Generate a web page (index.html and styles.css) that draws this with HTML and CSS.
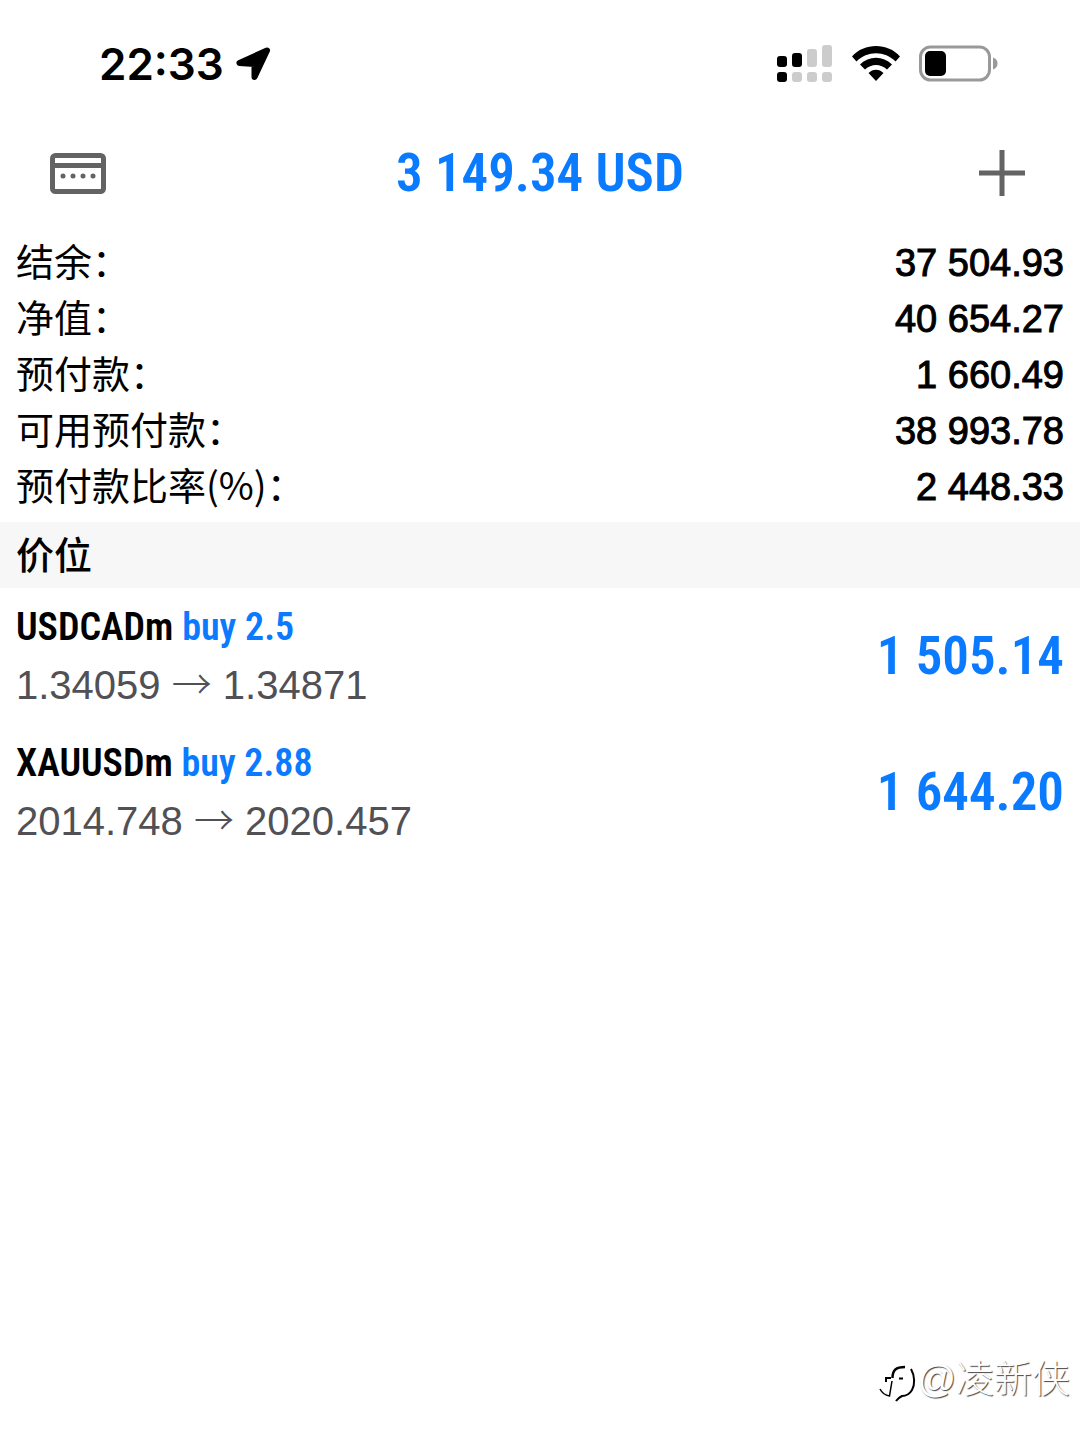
FILE: index.html
```
<!DOCTYPE html>
<html lang="zh-CN">
<head>
  <meta charset="UTF-8" />
  <meta name="viewport" content="width=device-width, initial-scale=1.0" />
  <title>交易</title>
  <link rel="stylesheet" href="styles.css">
</head>
<body>
  <div class="status-bar">
    <div class="status-left">
      <span class="time">22:33</span>
      <svg width="36" height="36" viewBox="0 0 36 36" aria-hidden="true">
        <path d="M32 4.500L4.500 17L19.500 18V31Z" stroke="#000" stroke-width="6" stroke-linejoin="round" />
      </svg>
    </div>
    <div class="status-right">
      <svg width="56" height="40" viewBox="0 0 56 40" aria-hidden="true">
        <rect x="0" y="12" width="10" height="11" rx="3" />
        <rect x="15" y="9" width="10" height="14" rx="3" />
        <g fill="#ccc">
          <rect x="30" y="5" width="10" height="18" rx="3" />
          <rect x="45" y="1" width="10" height="22" rx="3" />
          <rect x="15" y="28" width="10" height="10" rx="3" />
          <rect x="30" y="28" width="10" height="10" rx="3" />
          <rect x="45" y="28" width="10" height="10" rx="3" />
        </g>
        <rect x="0" y="28" width="10" height="10" rx="3" />
      </svg>
      <svg width="48" height="40" viewBox="0 0 48 40" aria-hidden="true">
        <path d="M0 12.500C12-1.500 36-1.500 48 12.500L43.500 17.500C33 6.500 15 6.500 4.500 17.500Z" />
        <path d="M8 20.500C17 11.500 31 11.500 40 20.500L35 25.500C28.500 19.500 19.500 19.500 13 25.500Z" />
        <path d="M16.500 29C20.500 24.500 27.500 24.500 31.500 29L24 37Z" />
      </svg>
      <svg width="80" height="40" viewBox="0 0 80 40" aria-hidden="true">
        <rect x="1.500" y="3" width="69" height="33" rx="10" fill="none" stroke="#999" stroke-width="3" />
        <rect x="6" y="7" width="21" height="25" rx="5" />
        <path d="M74 13.500C80 15 80 24 74 25.500Z" fill="#999" />
      </svg>
    </div>
  </div>

  <header class="nav">
    <button class="icon-btn" aria-label="账户">
      <svg width="56" height="42" viewBox="0 0 56 42">
        <rect x="2.500" y="3.500" width="51" height="36" rx="3" fill="none" stroke="#636363" stroke-width="5" />
        <path d="M2 13.500H54" stroke="#636363" stroke-width="5" />
        <g fill="#636363">
          <circle cx="13" cy="24" r="2.500" />
          <circle cx="23" cy="24" r="2.500" />
          <circle cx="33" cy="24" r="2.500" />
          <circle cx="43" cy="24" r="2.500" />
        </g>
      </svg>
    </button>
    <h1>3 149.34 USD</h1>
    <button class="icon-btn add-btn" aria-label="新订单">
      <svg width="56" height="46" viewBox="0 0 56 46">
        <path d="M28 0V46M5 23H51" stroke="#636363" stroke-width="5" />
      </svg>
    </button>
  </header>

  <dl class="summary">
    <div><dt>结余：</dt><dd>37 504.93</dd></div>
    <div><dt>净值：</dt><dd>40 654.27</dd></div>
    <div><dt>预付款：</dt><dd>1 660.49</dd></div>
    <div><dt>可用预付款：</dt><dd>38 993.78</dd></div>
    <div><dt>预付款比率(%)：</dt><dd>2 448.33</dd></div>
  </dl>

  <h2>价位</h2>
  <ul class="positions">
    <li>
      <div>
        <p class="order">USDCADm <span class="side">buy 2.5</span></p>
        <p class="price">1.34059 <span class="arrow">→</span> 1.34871</p>
      </div>
      <span class="profit">1 505.14</span>
    </li>
    <li>
      <div>
        <p class="order">XAUUSDm <span class="side">buy 2.88</span></p>
        <p class="price">2014.748 <span class="arrow">→</span> 2020.457</p>
      </div>
      <span class="profit">1 644.20</span>
    </li>
  </ul>

  <footer class="watermark">
    <svg width="40" height="56" viewBox="0 4 40 56" fill="none" stroke="#000" aria-hidden="true">
      <path d="M15.500 31C15.500 23 19 20 28 20" stroke-width="2.500" />
      <path d="M9 35V31H14M22 31.500H26" stroke-width="2" />
      <path d="M15 34L12.500 49Q6 48 3 42" stroke-width="1.500" />
      <path d="M34 22C38 29 38 38 35 43C32 48 28 49 25 49Q21 51 19 54" stroke-width="2" />
    </svg>
    <span>@凌新侠</span>
  </footer>
</body>
</html>
```
FILE: styles.css
```
* {
  box-sizing: border-box;
  margin: 0;
  padding: 0;
}
body {
  display: flex;
  flex-direction: column;
  min-height: 100vh;
  background-color: #fff;
  color: #000;
  font-family: "Liberation Sans", "Noto Sans CJK SC", sans-serif;
}
svg {
  display: block;
}
.status-bar {
  display: flex;
  justify-content: space-between;
  align-items: center;
  height: 128px;
  padding: 0 81px 0 99px;
}
.status-left {
  display: flex;
  align-items: center;
  gap: 11px;
}
.time {
  font-family: Inter, sans-serif;
  font-size: 44px;
  font-weight: 600;
}
.status-right {
  display: flex;
  align-items: center;
  gap: 19px;
}
.nav {
  display: grid;
  grid-template-columns: 1fr auto 1fr;
  align-items: center;
  height: 90px;
  padding: 0 50px;
}
.icon-btn {
  justify-self: start;
  border: none;
  background: none;
  cursor: pointer;
}
.add-btn {
  justify-self: end;
}
.nav h1,
.profit {
  color: #0a7aff;
  font-family: "Roboto Condensed", "Noto Sans CJK SC", sans-serif;
  font-size: 53px;
  font-weight: 600;
  line-height: 56px;
}
.summary {
  padding: 17px 16px 7px;
}
.summary div {
  display: flex;
  justify-content: space-between;
  height: 56px;
  font-size: 38px;
  line-height: 56px;
}
.summary dt {
  font-family: "Noto Sans CJK SC", sans-serif;
  line-height: 50px;
}
.summary dd {
  -webkit-text-stroke: 1px #000;
}
h2 {
  padding: 0 16px 4px;
  background-color: #f7f7f7;
  font-family: "Noto Sans CJK SC", sans-serif;
  font-size: 38px;
  font-weight: 500;
  line-height: 62px;
}
.positions {
  list-style: none;
}
.positions li {
  display: flex;
  justify-content: space-between;
  align-items: center;
  height: 136px;
  padding: 0 16px;
}
.order {
  font-family: "Roboto Condensed", "Noto Sans CJK SC", sans-serif;
  font-size: 38px;
  font-weight: 600;
  line-height: 58px;
}
.side {
  color: #0a7aff;
}
.price {
  color: #505055;
  font-size: 40px;
  line-height: 58px;
}
.arrow {
  font-family: "Noto Sans CJK SC", sans-serif;
  font-weight: 300;
  line-height: 1;
}
.watermark {
  display: flex;
  justify-content: flex-end;
  align-items: center;
  margin-top: auto;
  padding: 0 10px 33px;
}
.watermark span {
  color: #fff;
  font-size: 38px;
  font-weight: 300;
  line-height: 56px;
  text-shadow: 1px 1px 1px #444;
}
```
